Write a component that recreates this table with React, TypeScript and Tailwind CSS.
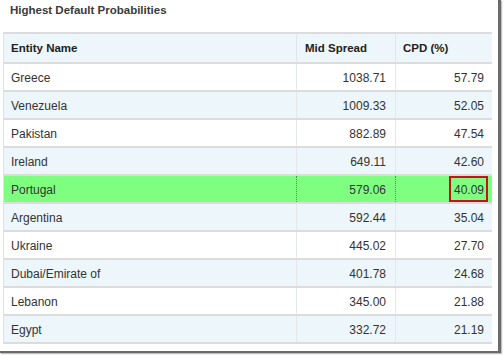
const rows = [
  { name: "Greece", spread: "1038.71", cpd: "57.79" },
  { name: "Venezuela", spread: "1009.33", cpd: "52.05" },
  { name: "Pakistan", spread: "882.89", cpd: "47.54" },
  { name: "Ireland", spread: "649.11", cpd: "42.60" },
  { name: "Portugal", spread: "579.06", cpd: "40.09", highlight: true },
  { name: "Argentina", spread: "592.44", cpd: "35.04" },
  { name: "Ukraine", spread: "445.02", cpd: "27.70" },
  { name: "Dubai/Emirate of", spread: "401.78", cpd: "24.68" },
  { name: "Lebanon", spread: "345.00", cpd: "21.88" },
  { name: "Egypt", spread: "332.72", cpd: "21.19" },
];

export default function App() {
  return (
    <div className="w-[504px] h-[355px] bg-white font-['Liberation_Sans',Arial,sans-serif] text-[12px] text-[#333]">
      <div className="w-[501px] h-[353px] bg-white border-r-[3px] border-b-[2px] border-[#6b6b6b] shadow-[1px_1px_1px_rgba(0,0,0,0.25)]">
        <div className="pl-[10px] pt-[2px] h-[32px] font-bold text-[11.5px] text-[#3a3a3a]">Highest Default Probabilities</div>
        <div className="ml-[3px] w-[489px] border-l border-[#e2e2e2]">
          {/* header */}
          <div className="grid grid-cols-[293px_99px_97px] h-[32px] bg-[#edf6fa] border-t-2 border-b-2 border-[#dcdcdc] font-bold text-[11.5px] text-[#222]">
            <div className="flex items-center pt-[1px] pl-[7px] border-r border-[#dfe6ea]">Entity Name</div>
            <div className="flex items-center pt-[1px] pl-[8px] border-r border-[#dfe6ea]">Mid Spread</div>
            <div className="flex items-center pt-[1px] pl-[7px]">CPD (%)</div>
          </div>
          {rows.map((r, i) => {
            const bg = r.highlight ? "bg-[#7fff7f]" : i % 2 === 0 ? "bg-white" : "bg-[#edf6fa]";
            const divider = r.highlight ? "border-r border-dotted border-[#5a8a5a]" : "border-r border-[#e4e8ea]";
            return (
              <div
                key={r.name}
                className={`grid grid-cols-[293px_99px_97px] h-[28px] border-b-2 border-[#dcdcdc] ${bg}`}
              >
                <div className={`flex items-center pt-[2px] pl-[7px] ${divider}`}>{r.name}</div>
                <div className={`flex items-center pt-[2px] justify-end pr-[9px] ${divider}`}>{r.spread}</div>
                <div className="flex items-center justify-end pr-[5px]">
                  {r.highlight ? (
                    <span className="border-2 border-[#c8101a] h-[26px] w-[39px] flex items-center pt-[2px] justify-end pr-[2px]">
                      {r.cpd}
                    </span>
                  ) : (
                    <span className="pt-[2px] pr-[4px]">{r.cpd}</span>
                  )}
                </div>
              </div>
            );
          })}
        </div>
      </div>
    </div>
  );
}
